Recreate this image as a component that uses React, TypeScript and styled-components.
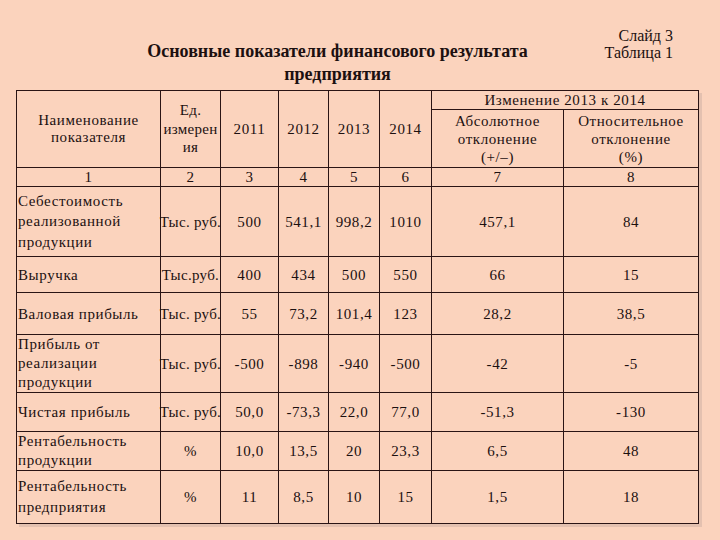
import React from 'react'
import styled, { createGlobalStyle } from 'styled-components'

const GlobalStyle = createGlobalStyle`
  html, body {
    margin: 0;
    padding: 0;
    background: #fbd3bd;
  }
`

const serif = `"Liberation Serif", "Times New Roman", serif`

const Slide = styled.div`
  width: 720px;
  height: 540px;
  background: #fbd3bd;
  color: #1c1010;
  font-family: ${serif};
  overflow: hidden;
  box-sizing: border-box;
  padding-top: 27px;
`

const Header = styled.div`
  display: flex;
  align-items: flex-start;
  padding-left: 110px;
  padding-right: 47px;
  height: 63px;
`

const Title = styled.h1`
  width: 455px;
  margin: 13px 0 0;
  font-family: ${serif};
  font-size: 18px;
  font-weight: bold;
  line-height: 23px;
  text-align: center;
`

const SlideLabel = styled.div`
  margin-left: auto;
  text-align: right;
  font-family: ${serif};
  font-size: 16px;
  line-height: 17px;
`

const Table = styled.table`
  margin-left: 16px;
  width: 682px;
  border-collapse: collapse;
  table-layout: fixed;
  box-shadow: 3px 3px 0 rgba(200, 170, 160, 0.45);
`

const Cell = styled.td<{ $align?: 'left' | 'center'; $h?: number; $lh?: number }>`
  border: 1px solid #2a1414;
  padding: 0 1px;
  font-family: ${serif};
  font-size: 15px;
  letter-spacing: 0.6px;
  line-height: ${({ $lh }) => $lh ?? 20}px;
  color: #1c1010;
  text-align: ${({ $align }) => $align ?? 'center'};
  vertical-align: middle;
  height: ${({ $h }) => ($h ? `${$h}px` : 'auto')};
  box-sizing: border-box;
  overflow: visible;
`

const Unit = styled.span`
  display: block;
  margin: 0 -4px;
  white-space: nowrap;
  letter-spacing: 0.3px;
`

const widths = [144, 60, 58, 50, 51, 52, 132, 135]

type Row = {
  name: React.ReactNode
  unit: string
  values: string[]
  h: number
  lh?: number
}

const rows: Row[] = [
  { name: <>Себестоимость<br />реализованной<br />продукции</>, unit: 'Тыс. руб.', values: ['500', '541,1', '998,2', '1010', '457,1', '84'], h: 70, lh: 20.5 },
  { name: 'Выручка', unit: 'Тыс.руб.', values: ['400', '434', '500', '550', '66', '15'], h: 36 },
  { name: 'Валовая прибыль', unit: 'Тыс. руб.', values: ['55', '73,2', '101,4', '123', '28,2', '38,5'], h: 42 },
  { name: <>Прибыль от<br />реализации<br />продукции</>, unit: 'Тыс. руб.', values: ['-500', '-898', '-940', '-500', '-42', '-5'], h: 57, lh: 19 },
  { name: 'Чистая прибыль', unit: 'Тыс. руб.', values: ['50,0', '-73,3', '22,0', '77,0', '-51,3', '-130'], h: 39 },
  { name: <>Рентабельность<br />продукции</>, unit: '%', values: ['10,0', '13,5', '20', '23,3', '6,5', '48'], h: 38, lh: 19 },
  { name: <>Рентабельность<br />предприятия</>, unit: '%', values: ['11', '8,5', '10', '15', '1,5', '18'], h: 53, lh: 21 },
]

export default function App() {
  return (
    <Slide>
      <GlobalStyle />
      <Header>
        <Title>
          Основные показатели финансового результата
          <br />
          предприятия
        </Title>
        <SlideLabel>
          Слайд 3
          <br />
          Таблица 1
        </SlideLabel>
      </Header>
      <Table>
        <colgroup>
          {widths.map((w, i) => (
            <col key={i} style={{ width: w }} />
          ))}
        </colgroup>
        <tbody>
          <tr>
            <Cell rowSpan={2} $lh={17}>Наименование<br />показателя</Cell>
            <Cell rowSpan={2} $lh={18.5}><Unit>Ед.<br />измерен<br />ия</Unit></Cell>
            <Cell rowSpan={2}>2011</Cell>
            <Cell rowSpan={2}>2012</Cell>
            <Cell rowSpan={2}>2013</Cell>
            <Cell rowSpan={2}>2014</Cell>
            <Cell colSpan={2} $h={19} $lh={18}>Изменение 2013 к 2014</Cell>
          </tr>
          <tr>
            <Cell $h={58} $lh={18}>Абсолютное<br />отклонение<br />(+/–)</Cell>
            <Cell $h={58} $lh={18}>Относительное<br />отклонение<br />(%)</Cell>
          </tr>
          <tr>
            {['1', '2', '3', '4', '5', '6', '7', '8'].map((n) => (
              <Cell key={n} $h={19} $lh={18}>{n}</Cell>
            ))}
          </tr>
          {rows.map((r, i) => (
            <tr key={i}>
              <Cell $align="left" $h={r.h} $lh={r.lh}>{r.name}</Cell>
              <Cell><Unit>{r.unit}</Unit></Cell>
              {r.values.map((v, j) => (
                <Cell key={j}>{v}</Cell>
              ))}
            </tr>
          ))}
        </tbody>
      </Table>
    </Slide>
  )
}
